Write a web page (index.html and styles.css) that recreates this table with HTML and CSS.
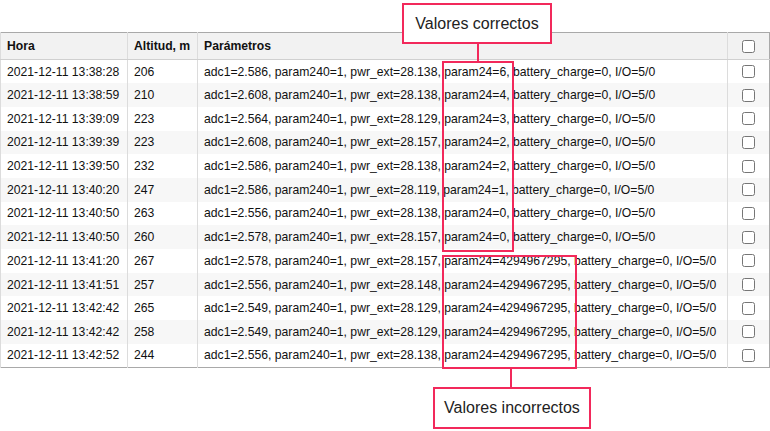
FILE: index.html
```html
<!DOCTYPE html>
<html lang="es">
<head>
	<meta charset="UTF-8">
	<title>Mensajes</title>
	<link rel="stylesheet" href="styles.css">
</head>
<body>
	<div class="page">
		<table class="grid">
			<thead>
				<tr>
					<th class="c-time">Hora</th>
					<th class="c-alt">Altitud, m</th>
					<th class="c-par">Parámetros</th>
					<th class="c-chk"><input type="checkbox"></th>
				</tr>
			</thead>
			<tbody>
				<tr><td>2021-12-11 13:38:28</td><td>206</td><td>adc1=2.586, param240=1, pwr_ext=28.138, param24=6, battery_charge=0, I/O=5/0</td><td class="c-chk"><input type="checkbox"></td></tr>
				<tr><td>2021-12-11 13:38:59</td><td>210</td><td>adc1=2.608, param240=1, pwr_ext=28.138, param24=4, battery_charge=0, I/O=5/0</td><td class="c-chk"><input type="checkbox"></td></tr>
				<tr><td>2021-12-11 13:39:09</td><td>223</td><td>adc1=2.564, param240=1, pwr_ext=28.129, param24=3, battery_charge=0, I/O=5/0</td><td class="c-chk"><input type="checkbox"></td></tr>
				<tr><td>2021-12-11 13:39:39</td><td>223</td><td>adc1=2.608, param240=1, pwr_ext=28.157, param24=2, battery_charge=0, I/O=5/0</td><td class="c-chk"><input type="checkbox"></td></tr>
				<tr><td>2021-12-11 13:39:50</td><td>232</td><td>adc1=2.586, param240=1, pwr_ext=28.138, param24=2, battery_charge=0, I/O=5/0</td><td class="c-chk"><input type="checkbox"></td></tr>
				<tr><td>2021-12-11 13:40:20</td><td>247</td><td>adc1=2.586, param240=1, pwr_ext=28.119, param24=1, battery_charge=0, I/O=5/0</td><td class="c-chk"><input type="checkbox"></td></tr>
				<tr><td>2021-12-11 13:40:50</td><td>263</td><td>adc1=2.556, param240=1, pwr_ext=28.138, param24=0, battery_charge=0, I/O=5/0</td><td class="c-chk"><input type="checkbox"></td></tr>
				<tr><td>2021-12-11 13:40:50</td><td>260</td><td>adc1=2.578, param240=1, pwr_ext=28.157, param24=0, battery_charge=0, I/O=5/0</td><td class="c-chk"><input type="checkbox"></td></tr>
				<tr><td>2021-12-11 13:41:20</td><td>267</td><td>adc1=2.578, param240=1, pwr_ext=28.157, param24=4294967295, battery_charge=0, I/O=5/0</td><td class="c-chk"><input type="checkbox"></td></tr>
				<tr><td>2021-12-11 13:41:51</td><td>257</td><td>adc1=2.556, param240=1, pwr_ext=28.148, param24=4294967295, battery_charge=0, I/O=5/0</td><td class="c-chk"><input type="checkbox"></td></tr>
				<tr><td>2021-12-11 13:42:42</td><td>265</td><td>adc1=2.549, param240=1, pwr_ext=28.129, param24=4294967295, battery_charge=0, I/O=5/0</td><td class="c-chk"><input type="checkbox"></td></tr>
				<tr><td>2021-12-11 13:42:42</td><td>258</td><td>adc1=2.549, param240=1, pwr_ext=28.129, param24=4294967295, battery_charge=0, I/O=5/0</td><td class="c-chk"><input type="checkbox"></td></tr>
				<tr><td>2021-12-11 13:42:52</td><td>244</td><td>adc1=2.556, param240=1, pwr_ext=28.138, param24=4294967295, battery_charge=0, I/O=5/0</td><td class="c-chk"><input type="checkbox"></td></tr>
			</tbody>
		</table>

		<!-- anotaciones -->
		<div class="note note-ok">Valores correctos</div>
		<div class="link link-ok"></div>
		<div class="mark mark-ok"></div>
		<div class="mark mark-bad"></div>
		<div class="link link-bad"></div>
		<div class="note note-bad">Valores incorrectos</div>
	</div>
</body>
</html>
```

FILE: styles.css
```css
*{
	margin:0;
	padding:0;
	box-sizing:border-box;
}
body{
	background-color:#fff;
	font-family:"Liberation Sans",Arial,sans-serif;
	color:#111;
}
.page{
	position:relative;
	width:770px;
	height:431px;
	padding-top:32px;
}
.grid{
	width:770px;
	border-collapse:collapse;
	border:1px solid #a9a9a9;
	font-size:12.2px;
	table-layout:fixed;
}
.grid th,.grid td{
	text-align:left;
	padding:0 6px;
	border-left:1px solid #dcdcdc;
	white-space:nowrap;
}
.grid th{
	height:27px;
	background-color:#f2f2f2;
	border-bottom:1px solid #d0d0d0;
	font-weight:bold;
}
.grid td{
	height:23.7px;
}
.grid tbody tr:nth-child(even){
	background-color:#f7f7f7;
}
.c-time{
	width:127px;
}
.c-alt{
	width:70px;
}
.c-par{
	width:530px;
}
.grid .c-chk{
	text-align:center;
	padding:0;
}
.c-chk input{
	display:block;
	margin:0 auto;
	width:13px;
	height:13px;
}
/* anotaciones */
.note{
	position:absolute;
	border:2px solid #f2295b;
	background-color:#fff;
	font-size:16px;
	color:#222;
	display:flex;
	align-items:center;
	justify-content:center;
}
.note-ok{
	left:402px;
	top:3px;
	width:150px;
	height:41px;
}
.note-bad{
	left:433px;
	top:387px;
	width:158px;
	height:42px;
}
.mark{
	position:absolute;
	border:2px solid #f2295b;
}
.mark-ok{
	left:442px;
	top:61px;
	width:72px;
	height:191px;
}
.mark-bad{
	left:442px;
	top:255px;
	width:135px;
	height:114px;
}
.link{
	position:absolute;
	width:2px;
	background-color:#f2295b;
}
.link-ok{
	left:477px;
	top:43px;
	height:19px;
}
.link-bad{
	left:510px;
	top:368px;
	height:20px;
}
```
